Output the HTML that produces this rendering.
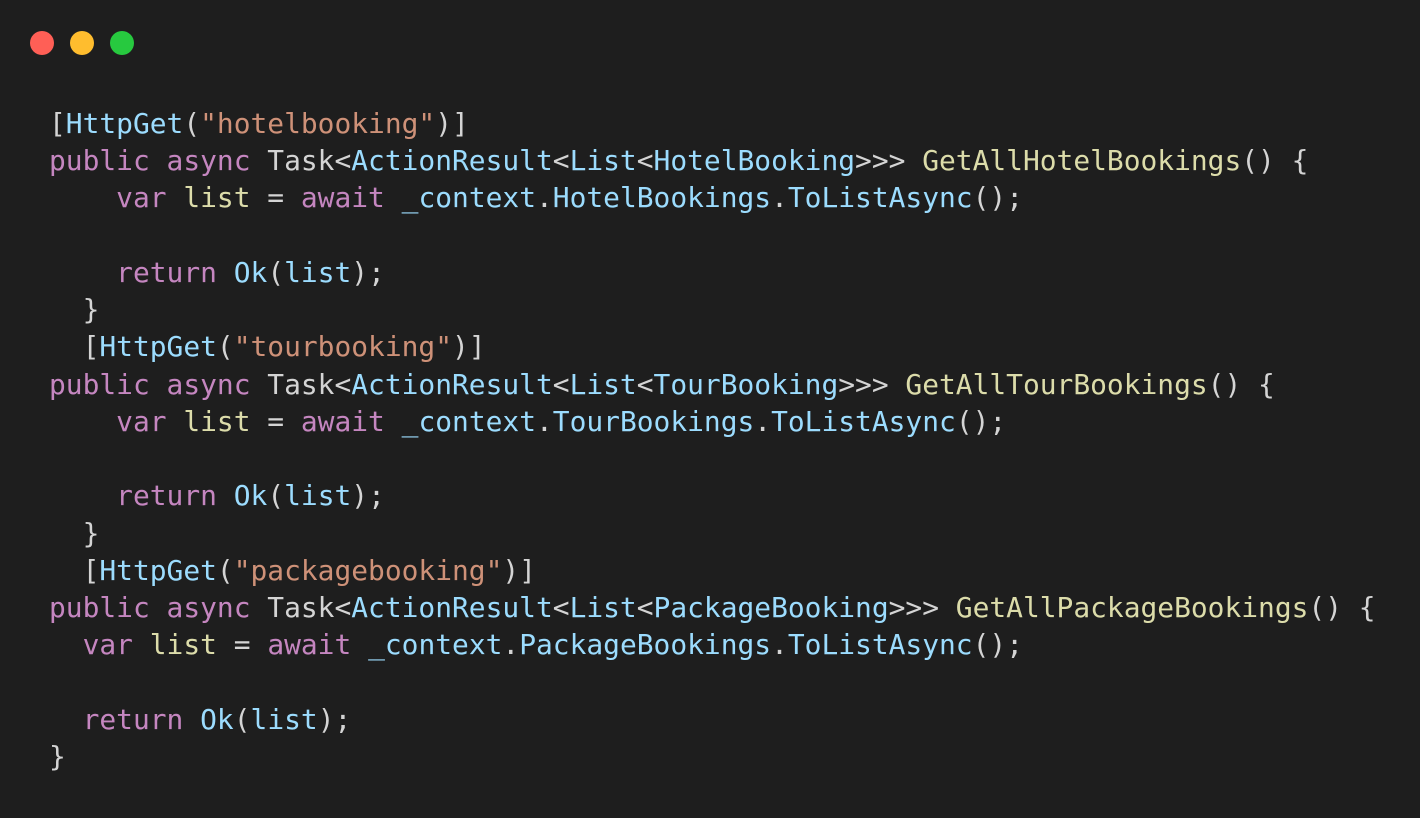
<!DOCTYPE html>
<html><head><meta charset="utf-8"><style>
html,body{margin:0;padding:0;background:#1e1e1e;width:1420px;height:818px;overflow:hidden}
.d{position:absolute;top:31px;width:24px;height:24px;border-radius:50%}
pre{position:absolute;left:49px;top:105px;margin:0;font-family:"DejaVu Sans Mono","Liberation Mono",monospace;font-size:27.9px;line-height:37.24px;color:#d4d4d4}
.k{color:#c586c0}.t{color:#9cdcfe}.s{color:#ce9178}.f{color:#dcdcaa}
</style></head><body>
<div class="d" style="left:30px;background:#ff5f56"></div>
<div class="d" style="left:70px;background:#ffbd2e"></div>
<div class="d" style="left:110px;background:#27c93f"></div>
<pre>[<span class="t">HttpGet</span>(<span class="s">"hotelbooking"</span>)]
<span class="k">public</span> <span class="k">async</span> Task&lt;<span class="t">ActionResult</span>&lt;<span class="t">List</span>&lt;<span class="t">HotelBooking</span>&gt;&gt;&gt; <span class="f">GetAllHotelBookings</span>() {
    <span class="k">var</span> <span class="f">list</span> = <span class="k">await</span> <span class="t">_context</span>.<span class="t">HotelBookings</span>.<span class="t">ToListAsync</span>();

    <span class="k">return</span> <span class="t">Ok</span>(<span class="t">list</span>);
  }
  [<span class="t">HttpGet</span>(<span class="s">"tourbooking"</span>)]
<span class="k">public</span> <span class="k">async</span> Task&lt;<span class="t">ActionResult</span>&lt;<span class="t">List</span>&lt;<span class="t">TourBooking</span>&gt;&gt;&gt; <span class="f">GetAllTourBookings</span>() {
    <span class="k">var</span> <span class="f">list</span> = <span class="k">await</span> <span class="t">_context</span>.<span class="t">TourBookings</span>.<span class="t">ToListAsync</span>();

    <span class="k">return</span> <span class="t">Ok</span>(<span class="t">list</span>);
  }
  [<span class="t">HttpGet</span>(<span class="s">"packagebooking"</span>)]
<span class="k">public</span> <span class="k">async</span> Task&lt;<span class="t">ActionResult</span>&lt;<span class="t">List</span>&lt;<span class="t">PackageBooking</span>&gt;&gt;&gt; <span class="f">GetAllPackageBookings</span>() {
  <span class="k">var</span> <span class="f">list</span> = <span class="k">await</span> <span class="t">_context</span>.<span class="t">PackageBookings</span>.<span class="t">ToListAsync</span>();

  <span class="k">return</span> <span class="t">Ok</span>(<span class="t">list</span>);
}</pre>
</body></html>
